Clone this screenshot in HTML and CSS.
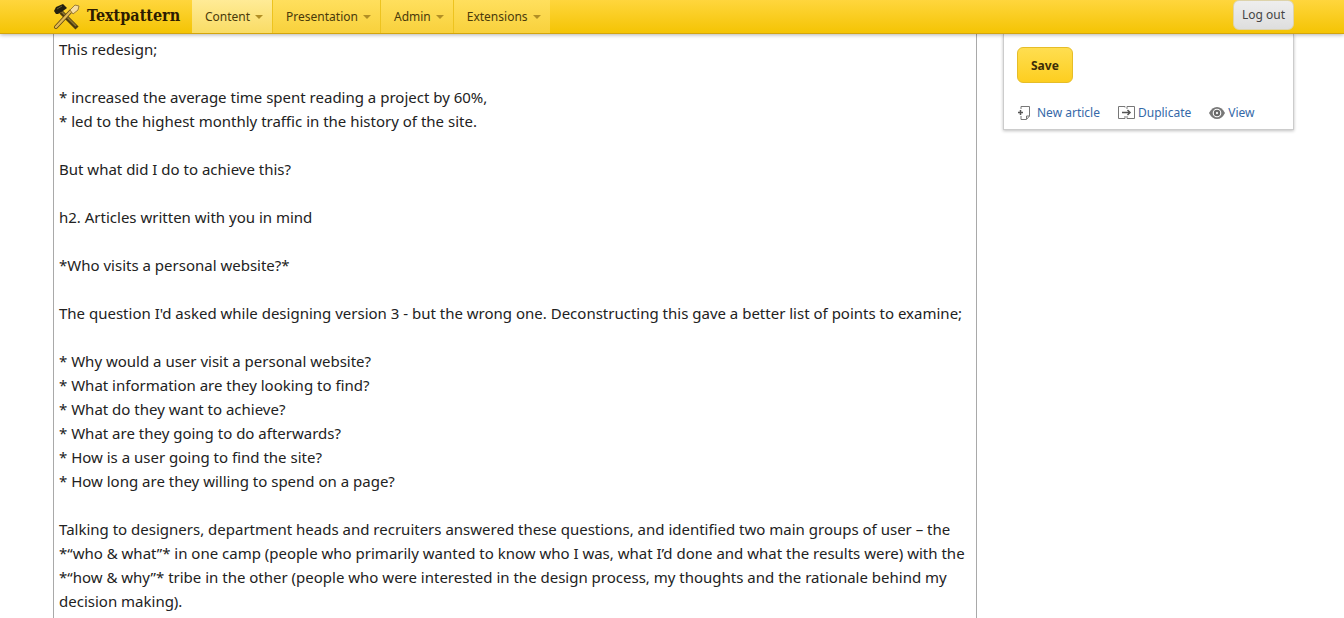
FILE: index.html
```html
<!DOCTYPE html>
<html lang="en">
<head>
<meta charset="utf-8">
<meta name="viewport" content="width=device-width, initial-scale=1">
<title>Textpattern – Write</title>
<link rel="stylesheet" href="styles.css">
</head>
<body>
<header class="topbar">
  <a class="brand" href="#">
    <svg class="brand-icon" viewBox="0 0 28 28" aria-hidden="true">
      <path d="M8 9L24 25" stroke="#4e3c0d" stroke-width="4.4"/>
      <path d="M8 8L23 23" stroke="#8b7432" stroke-width="1.6"/>
      <path d="M1 8L3 4L10 1L14 5L10 8L5 11L3 11Z" fill="#24200f"/>
      <path d="M4 6L9 3" stroke="#665c37" stroke-width="1"/>
      <path d="M3 24L18 8" stroke="#5e4713" stroke-width="4" stroke-linecap="round"/>
      <path d="M3 24L18 8" stroke="#e2b953" stroke-width="2.4" stroke-linecap="round"/>
      <path d="M17 7L22 2L26 3L25 7L20 11Z" fill="#f7dda0" stroke="#9c7c35" stroke-width="1"/>
    </svg>
    <span>Textpattern</span>
  </a>
  <nav class="menu" aria-label="Main">
    <a class="menu-item is-active" href="#">Content<span class="caret"></span></a>
    <a class="menu-item" href="#">Presentation<span class="caret"></span></a>
    <a class="menu-item" href="#">Admin<span class="caret"></span></a>
    <a class="menu-item" href="#">Extensions<span class="caret"></span></a>
  </nav>
  <button class="logout" type="button">Log out</button>
</header>
<main class="page">
  <textarea class="editor" aria-label="Article body" spellcheck="false">This redesign;

* increased the average time spent reading a project by 60%,
* led to the highest monthly traffic in the history of the site.

But what did I do to achieve this?

h2. Articles written with you in mind

*Who visits a personal website?*

The question I'd asked while designing version 3 - but the wrong one. Deconstructing this gave a better list of points to examine;

* Why would a user visit a personal website?
* What information are they looking to find?
* What do they want to achieve?
* What are they going to do afterwards?
* How is a user going to find the site?
* How long are they willing to spend on a page?

Talking to designers, department heads and recruiters answered these questions, and identified two main groups of user – the *“who &amp; what”* in one camp (people who primarily wanted to know who I was, what I’d done and what the results were) with the *“how &amp; why”* tribe in the other (people who were interested in the design process, my thoughts and the rationale behind my decision making).</textarea>
  <aside class="panel">
    <button class="save" type="button">Save</button>
    <div class="actions">
      <a href="#"><svg class="icon-page" viewBox="0 0 14 16" aria-hidden="true"><path d="M4 4V1.500H12.500V11L9.500 14.500H4V11M9.500 14V11H12.500" fill="none" stroke="#777"/><path d="M1 7.500H6M3.500 5V10" stroke="#555" stroke-width="1.500"/></svg>New article</a>
      <a href="#"><svg class="icon-copy" viewBox="0 0 17 14" aria-hidden="true"><path d="M7 1.500V.5H.5V12.500H7V10M9 3V.5H16.500V12.500H9V10" fill="none" stroke="#777"/><path d="M4 6.500H12M9.500 4L12 6.500L9.500 9" fill="none" stroke="#555" stroke-width="1.500"/></svg>Duplicate</a>
      <a href="#"><svg class="icon-eye" viewBox="0 0 16 12" aria-hidden="true"><path d="M0 6Q3 0 8 0T16 6Q13 12 8 12T0 6Z" fill="#777"/><circle cx="8" cy="6" r="4.300" fill="#fff"/><circle cx="8" cy="6" r="3.200" fill="#666"/><circle cx="8" cy="6" r="1.200" fill="#eee"/></svg>View</a>
    </div>
  </aside>
</main>
</body>
</html>
```
FILE: styles.css
```css
* { box-sizing: border-box; }

body {
  margin: 0;
  min-height: 100vh;
  display: flex;
  flex-direction: column;
  background: #fff;
  font: 12px/20px "Noto Sans", "Open Sans", sans-serif;
}

.topbar {
  position: relative;
  display: flex;
  align-items: stretch;
  height: 34px;
  padding: 0 50px 0 53px;
  background: linear-gradient(#ffd63d, #f4c404);
  border-bottom: 1px solid #d3a40c;
  box-shadow: 0 1px 4px rgba(0, 0, 0, .3);
}

.brand {
  display: flex;
  align-items: center;
  gap: 6px;
  width: 139px;
  color: #2e1c00;
  font: bold 16px/20px "DejaVu Serif Condensed", "DejaVu Serif", serif;
  text-decoration: none;
}

.brand-icon { width: 28px; height: 28px; flex: none; }
.brand span { padding-bottom: 2px; }

.menu { display: flex; background: linear-gradient(#ffdf5d, #f8d13c); }

.menu-item {
  display: flex;
  align-items: center;
  gap: 5px;
  padding: 0 9px 0 13px;
  border-right: 1px solid #edc31f;
  color: #4a3a0a;
  text-decoration: none;
}

.menu-item:last-child { border-right: 0; }
.menu-item.is-active { background: linear-gradient(#ffeb96, #f9dc65); }

.caret {
  border: 4px solid transparent;
  border-top-color: #b28f25;
  border-bottom: 0;
}

.logout {
  align-self: flex-start;
  height: 30px;
  margin-left: auto;
  padding: 0 8px;
  border: 1px solid #ddd3ab;
  border-radius: 6px;
  background: linear-gradient(#eee, #dedede);
  color: #444;
  font: inherit;
}

.page {
  flex: 1;
  display: grid;
  grid-template-columns: minmax(0, 924fr) minmax(0, 291fr);
  column-gap: 26px;
  align-items: start;
  padding: 0 50px 0 53px;
}

.editor {
  align-self: stretch;
  width: 100%;
  padding: 3px 5px 0;
  border: solid #a9a9a9;
  border-width: 0 1px;
  outline: 0;
  resize: none;
  overflow: hidden;
  background: transparent;
  color: #222;
  font: 15px/24px "Noto Sans", "Open Sans", sans-serif;
}

.panel {
  padding: 13px 13px 6px;
  border: 1px solid #ccc;
  border-top: 0;
  box-shadow: 0 1px 3px rgba(0, 0, 0, .25);
}

.save {
  height: 36px;
  padding: 2px 13px 0;
  border: 1px solid #e6bd28;
  border-radius: 6px;
  background: linear-gradient(#ffde50, #fdce20);
  color: #3c2d08;
  font: bold 12px/20px "Noto Sans", "Open Sans", sans-serif;
}

.actions { display: flex; gap: 18px; margin-top: 20px; }

.actions a {
  display: flex;
  align-items: center;
  gap: 3px;
  color: #3568a8;
  text-decoration: none;
  white-space: nowrap;
}

.icon-page { width: 14px; height: 16px; margin-right: 3px; }
.icon-copy { width: 17px; height: 14px; }
.icon-eye { width: 16px; height: 12px; }
```
